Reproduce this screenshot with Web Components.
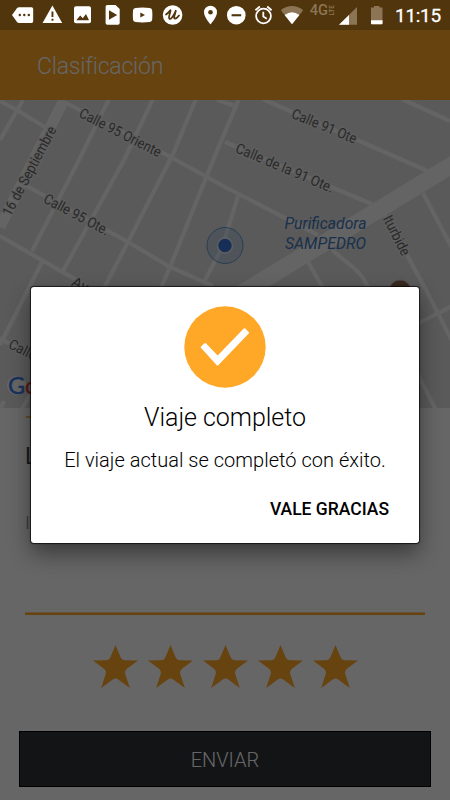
<!DOCTYPE html>
<html lang="es">
<head>
<meta charset="utf-8">
<meta name="viewport" content="width=device-width, initial-scale=1">
<title>Clasificación</title>
<style>
html,
body {
  margin: 0;
  height: 100%;
  overflow: hidden;
  font-family: Roboto, "Liberation Sans", sans-serif;
  font-weight: 300;
}
</style>
</head>
<body>
<trip-screen>
  <status-bar slot="status">11:15</status-bar>
  <app-header>Clasificación</app-header>
  <city-map></city-map>
  <rating-form label="L" hint="I" stars="5">ENVIAR</rating-form>
  <trip-dialog slot="dialog">
    <span slot="title">Viaje completo</span>
    <span slot="message">El viaje actual se completó con éxito.</span>
    <span slot="action">VALE GRACIAS</span>
  </trip-dialog>
</trip-screen>

<script>
/**
 * Attaches an open shadow root and fills it with markup.
 * @param {HTMLElement} host - The element
 * @param {string} html - Styles and markup
 */
function render(host, html) {
  const template = document.createElement('template')
  template.innerHTML = html
  host.attachShadow({ mode: 'open' }).appendChild(template.content.cloneNode(true))
}

customElements.define('trip-screen',
  /**
   * Whole screen: status bar, page, dimmed layer and dialog.
   */
  class extends HTMLElement {
    constructor() {
      super()
      render(this, `
  <style>
:host {
  display: flex;
  flex-direction: column;
  width: 450px;
  height: 800px;
  position: relative;
  overflow: hidden;
  background: #fff;
}

.page {
  flex: 1;
  display: flex;
  flex-direction: column;
}

/* Lies over the page and centers the dialog */
.scrim {
  position: absolute;
  inset: 30px 0 0 0;
  display: flex;
  align-items: center;
  justify-content: center;
  background: rgba(0, 0, 0, 0.6);
}
  </style>
  <slot name="status"></slot>
  <div class="page"><slot></slot></div>
  <div class="scrim"><slot name="dialog"></slot></div>`)
    }
  }
)

customElements.define('status-bar',
  /**
   * Android status bar with notification and system icons.
   */
  class extends HTMLElement {
    constructor() {
      super()
      render(this, `
  <style>
:host {
  display: flex;
  height: 30px;
  background: #51350c;
  color: #fff;
  font-size: 19px;
  font-weight: 400;
  line-height: 31px;
}

svg {
  display: block;
  flex: none;
  width: 395px;
  height: 30px;
  fill: #fff;
}

.ink { fill: #51350c; }
.dim { fill: #8c7555; }
.line { fill: none; stroke: #fff; }

.time {
  letter-spacing: -0.3px;
  white-space: nowrap;
  -webkit-text-stroke: 0.3px #fff;
}
  </style>
  <svg viewBox="0 0 395 30">
    <path d="M12 15 17 8.3Q17.8 7.3 19 7.3H31.5Q33.2 7.3 33.2 9V21.3Q33.2 23 31.5 23H19Q17.8 23 17 22Z"/>
    <g class="ink"><circle cx="19.8" cy="15" r="1.2"/><circle cx="24.3" cy="15" r="1.2"/><circle cx="28.8" cy="15" r="1.2"/></g>

    <path d="M52.4 5.6 62.2 23H42.6Z"/>
    <path class="ink" d="M51.5 11.5h1.9v5.5h-1.9zM51.5 18.7h1.9v2h-1.9z"/>

    <rect x="74" y="6.3" width="17" height="17" rx="2"/>
    <path class="ink" d="M76.3 20.3 80.2 15.5 82.8 18.2 86 14 89 20.3Z"/>

    <path d="M107.3 5H115.5L119.7 9V23Q119.7 24.7 118 24.7H107.3Q105.6 24.7 105.6 23V6.7Q105.6 5 107.3 5Z"/>
    <path class="ink" d="M109 10.3 117.2 15 109 19.7Z"/>

    <path d="M135.5 8Q142.5 7.2 149.8 8 152 8.2 152.2 10.5 152.6 15 152.2 19.5 152 21.8 149.8 22 142.5 22.8 135.5 22 133.2 21.8 133 19.5 132.6 15 133 10.5 133.2 8.2 135.5 8Z"/>
    <path class="ink" d="M140.3 12.5 145 15 140.3 17.5Z"/>

    <circle cx="172.6" cy="15" r="9.8"/>
    <path fill="none" stroke="#51350c" stroke-width="1.8" stroke-linecap="round" stroke-linejoin="round" d="M166 14.5C168 13 169.5 11 170.5 10.3 170.3 13 167.8 18 169.6 18.9 172 19.2 174.3 14 175.8 10.8 175.2 13.5 173 18.3 175 18.7 176.7 18.7 178 17 179 15.6"/>

    <path d="M210.5 5.7A6.5 6.5 0 0 1 217 12.2C217 17 210.5 24.4 210.5 24.4S204 17 204 12.2A6.5 6.5 0 0 1 210.5 5.7Z"/>
    <circle class="ink" cx="210.5" cy="12.2" r="2.3"/>

    <circle cx="236.3" cy="15.2" r="9.3"/>
    <rect class="ink" x="231.6" y="14.2" width="9.6" height="2.1"/>

    <g class="line" stroke-width="1.8">
      <circle cx="263.5" cy="16" r="7.4"/>
      <path d="M263.3 11.7V16.5L266.8 18.7M255.4 10.2 259.8 6.5M271.6 10.2 267.2 6.5"/>
    </g>

    <path class="dim" d="M280.8 10.2Q292 1.8 303.2 10.2L292 24.3Z"/>
    <path d="M284.6 15Q292 9.4 299.4 15L292 24.3Z"/>

    <text class="dim" x="309.7" y="15.2" font-size="15" font-weight="500" textLength="18.3" lengthAdjust="spacingAndGlyphs">4G</text>
    <text class="dim" transform="translate(334 15.5) rotate(-90)" font-size="7.5" font-weight="500" textLength="10.5" lengthAdjust="spacingAndGlyphs">LTE</text>

    <path class="dim" d="M357 7V24.8H339Z"/>
    <path d="M349 15V24.8H339Z"/>

    <path class="dim" d="M374 7.6V6H379.5V7.6H382.5V24.2H371V7.6Z"/>
    <path d="M371 20.3h11.5v2.9q0 1-1 1h-9.5q-1 0-1-1z"/>
  </svg>
  <span class="time"><slot></slot></span>`)
    }
  }
)

customElements.define('app-header',
  /**
   * Title bar.
   */
  class extends HTMLElement {
    constructor() {
      super()
      render(this, `
  <style>
:host {
  display: flex;
  align-items: center;
  box-sizing: border-box;
  height: 70px;
  padding: 2px 0 0 37px;
  background: #ffa726;
  color: #fff;
  font-size: 23px;
  letter-spacing: -0.2px;
}
  </style>
  <slot></slot>`)
    }
  }
)

customElements.define('city-map',
  /**
   * Street map around the destination.
   */
  class extends HTMLElement {
    /**
     * Street names: text, x, y, angle, length
     * @type {Array<Array>}
     */
    #streets = [
      ['Calle 95 Oriente', 78, 116.5, 27, 90],
      ['16 de Septiembre', 10.5, 217, -62, 99],
      ['Calle 95 Ote.', 42.5, 202, 28, 72],
      ['Calle 91 Ote', 290.5, 117.5, 22.5, 69],
      ['Calle de la 91 Ote.', 234.5, 152, 23, 105],
      ['Iturbide', 382.5, 218.5, 63, 43],
      ['Calle', 7.5, 347.5, 27, 29],
      ['Av', 70.5, 285, 27, 17]
    ]

    constructor() {
      super()
      const names = this.#streets.map(([name, x, y, angle, length]) =>
        `<text transform="translate(${x} ${y}) rotate(${angle})" textLength="${length}" lengthAdjust="spacingAndGlyphs">${name}</text>`).join('')

      render(this, `
  <style>
:host {
  display: block;
  height: 308px;
  background: #e0e0e0;
}

svg {
  display: block;
  width: 450px;
  height: 308px;
}

.roads {
  fill: none;
  stroke: #fafafa;
  stroke-width: 4.2;
}

.names {
  font-size: 14.5px;
  font-weight: 400;
  fill: #686868;
  stroke: #ebebeb;
  stroke-width: 3px;
  paint-order: stroke;
  stroke-linejoin: round;
}

.place {
  font-size: 16.6px;
  font-style: italic;
  font-weight: 400;
  fill: #4379bd;
}

.logo {
  font-family: Lato, Roboto, sans-serif;
  font-size: 23.5px;
  font-weight: 400;
  stroke-width: 0.5px;
}

.halo {
  fill: #fff;
  stroke: #fff;
  stroke-width: 3px;
}
  </style>
  <svg viewBox="0 100 450 308">
    <g class="roads">
      <path d="M64 100 33 161 0 227" stroke-width="11"/>
      <path d="M460 160 252 287 200 319" stroke-width="17"/>
      <path d="M0 101 15 109 45 127M23 100 0 140"/>
      <path d="M66 103 167 155 225 187 318 235M332 250 355 269Q364 277 368 288"/>
      <path d="M109 99 79 160 32 251M153 99 124 160 63 271M196 99 173 154 128 242 103 290"/>
      <path d="M239 99 214 158 170 267 160 290M238 196 222 248 205 280"/>
      <path d="M25 185 128 242 170 267 213 286M-2 235 80 282 90 288"/>
      <path d="M42 262 0 345M0 338 32 358M4 401 0 409M31 393 22 409"/>
      <path d="M217 100 235 106M263 99 292 112 357 140 430 172M402 99 450 121"/>
      <path d="M225 142 300 174 372 204M423 193 452 248"/>
      <path d="M385 215 425 288 452 341M452 306 417 324M417 373 436 410M308 262 323 288"/>
    </g>
    <g class="names">${names}</g>
    <g class="place">
      <text x="284.5" y="228.9" textLength="82" lengthAdjust="spacingAndGlyphs">Purificadora</text>
      <text x="285" y="248.9" textLength="81" lengthAdjust="spacingAndGlyphs">SAMPEDRO</text>
    </g>
    <circle cx="225" cy="245.5" r="18" fill="#4a9cd6" fill-opacity="0.2" stroke="#4a8cc6" stroke-width="0.8"/>
    <circle cx="225" cy="245.5" r="7.5" fill="#3a73d8" stroke="#eee" stroke-width="1.5"/>
    <circle cx="400" cy="291" r="11" fill="#8d6550" stroke="#c9bdb6"/>
    <circle class="halo" cx="16.5" cy="385.5" r="8"/>
    <circle class="halo" cx="31" cy="388" r="4"/>
    <text class="logo" x="8" y="393.7"><tspan fill="#3f7de8" stroke="#3f7de8">G</tspan><tspan fill="#e8402f" stroke="#e8402f">o</tspan></text>
  </svg>`)
    }
  }
)

customElements.define('rating-form',
  /**
   * Comment field, stars and send button.
   */
  class extends HTMLElement {
    constructor() {
      super()
      const star = '<svg viewBox="0 0 45 43"><path d="M22.5 0 27.5 12Q29 15.2 32 15.2L45 15.4 34.3 23.4Q31.2 26 32.4 29.5L36.8 43 25.6 34.7Q22.5 32.3 19.4 34.7L8.2 43 12.6 29.5Q13.8 26 10.7 23.4L0 15.4 13 15.2Q16 15.2 17.5 12Z"/></svg>'

      render(this, `
  <style>
:host {
  flex: 1;
  display: flex;
  flex-direction: column;
  box-sizing: border-box;
  padding: 8px 19px 13px;
}

.divider {
  width: 370px;
  height: 2px;
  margin-left: 7px;
  background: #ffb84f;
}

.label {
  margin: 24px 0 0 6px;
  font-size: 23px;
  line-height: 30px;
  font-weight: 400;
  color: #444;
}

.hint {
  margin: 36px 6px 0;
  height: 104px;
  font-size: 19px;
  line-height: 30px;
  color: #888;
}

.underline {
  height: 2px;
  margin: 0 6px;
  background: #ffa726;
  border-top: 1px solid #ffcf8a;
}

.stars {
  display: flex;
  justify-content: center;
  gap: 10px;
  margin: 30px 0 42px;
}

.stars svg {
  width: 45px;
  height: 43px;
  fill: #ffa726;
}

button {
  flex: none;
  height: 56px;
  margin: auto 0 0;
  padding: 2px 0 0;
  border: 1px solid #000;
  background: #2d3237;
  color: #fff;
  font: 300 20px Roboto, "Liberation Sans", sans-serif;
}
  </style>
  <div class="divider"></div>
  <div class="label">${this.getAttribute('label')}</div>
  <div class="hint">${this.getAttribute('hint')}</div>
  <div class="underline"></div>
  <div class="stars">${star.repeat(Number(this.getAttribute('stars')))}</div>
  <button><slot></slot></button>`)
    }
  }
)

customElements.define('trip-dialog',
  /**
   * Confirmation dialog for a finished trip.
   */
  class extends HTMLElement {
    constructor() {
      super()
      render(this, `
  <style>
:host {
  display: flex;
  flex-direction: column;
  align-items: center;
  box-sizing: border-box;
  width: 388px;
  height: 256px;
  padding-top: 19px;
  border-radius: 3px;
  background: #fff;
  color: #000;
  box-shadow: 0 0 1px 1px rgba(0, 0, 0, 0.7), 0 10px 22px rgba(0, 0, 0, 0.45);
}

svg {
  display: block;
  width: 82px;
  height: 82px;
}

.title {
  margin-top: 14px;
  font-size: 25px;
  line-height: 32px;
  letter-spacing: -0.05px;
}

.message {
  margin-top: 12px;
  font-size: 20px;
  line-height: 28px;
  letter-spacing: 0.02px;
  white-space: nowrap;
}

.action {
  align-self: flex-end;
  margin: 21px 30px 0 0;
  font-size: 17.5px;
  font-weight: 500;
  line-height: 28px;
}
  </style>
  <svg viewBox="0 0 82 82">
    <circle cx="41" cy="41" r="40.7" fill="#ffa726"/>
    <path fill="#fff" stroke="#fff" stroke-width="2" stroke-linejoin="round" d="M17.7 41.2 21.2 38 33.7 51 60.5 23.2 64 26.8 33.5 58.5Z"/>
  </svg>
  <div class="title"><slot name="title"></slot></div>
  <div class="message"><slot name="message"></slot></div>
  <div class="action"><slot name="action"></slot></div>`)
    }
  }
)
</script>
</body>
</html>
